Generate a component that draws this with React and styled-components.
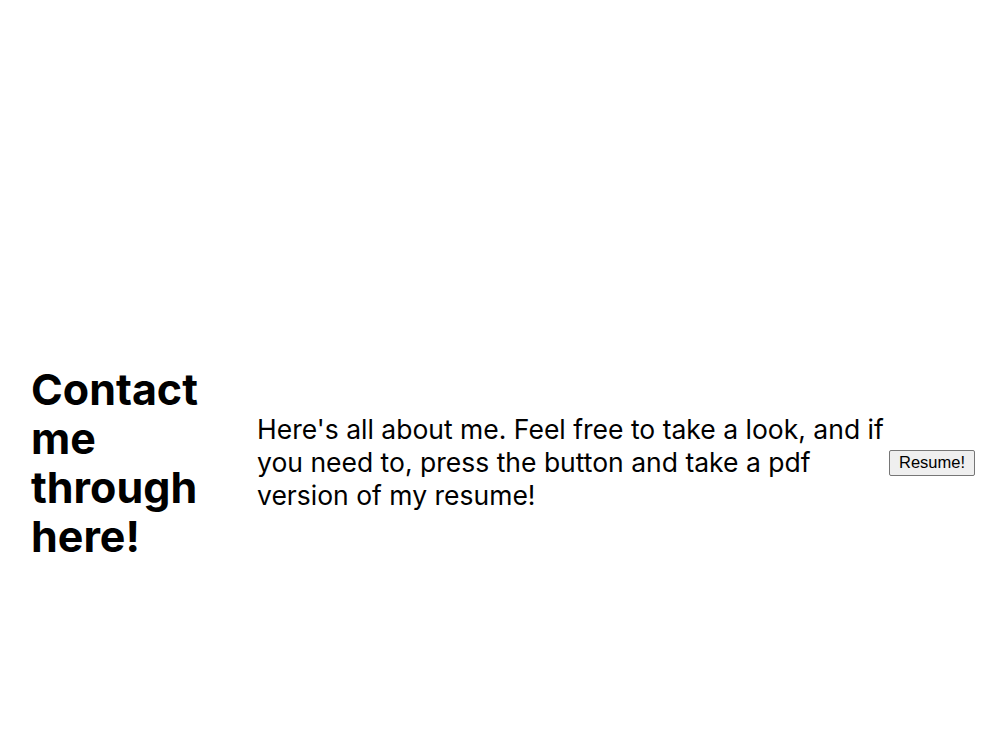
import React from 'react';
import styled, { createGlobalStyle } from 'styled-components';

const GlobalStyle = createGlobalStyle`
  html, body {
    margin: 0;
    padding: 0;
    background: #ffffff;
  }
  body {
    font-family: 'Inter', 'Noto Sans', sans-serif;
    color: #000000;
  }
`;

const Section = styled.section`
  box-sizing: border-box;
  height: 100vh;
  padding: 188px 13px 0 31px;
  display: flex;
  align-items: center;
`;

const Heading = styled.h1`
  width: 226px;
  flex-shrink: 0;
  margin: 0;
  font-size: 43px;
  line-height: 49px;
  font-weight: 700;
  letter-spacing: 0;

  span {
    display: block;
  }
`;

const Body = styled.p`
  flex: 1;
  max-width: 632px;
  margin: 0;
  font-size: 26.5px;
  line-height: 33px;
  font-weight: 400;
`;

const ResumeButton = styled.button`
  margin-left: auto;
  box-sizing: border-box;
  font-family: 'Liberation Sans', Arial, sans-serif;
  font-size: 16.5px;
  padding: 0 4px;
  height: 26px;
  width: 86px;
  color: #000000;
  background: #efefef;
  border: 1px solid #767676;
  border-radius: 2px;
  cursor: pointer;
`;

export default function App() {
  return (
    <>
      <GlobalStyle />
      <Section>
        <Heading>
          <span>Contact</span>
          <span>me</span>
          <span>through</span>
          <span>here!</span>
        </Heading>
        <Body>
          Here's all about me. Feel free to take a look, and if you need to,
          press the button and take a pdf version of my resume!
        </Body>
        <ResumeButton>Resume!</ResumeButton>
      </Section>
    </>
  );
}
